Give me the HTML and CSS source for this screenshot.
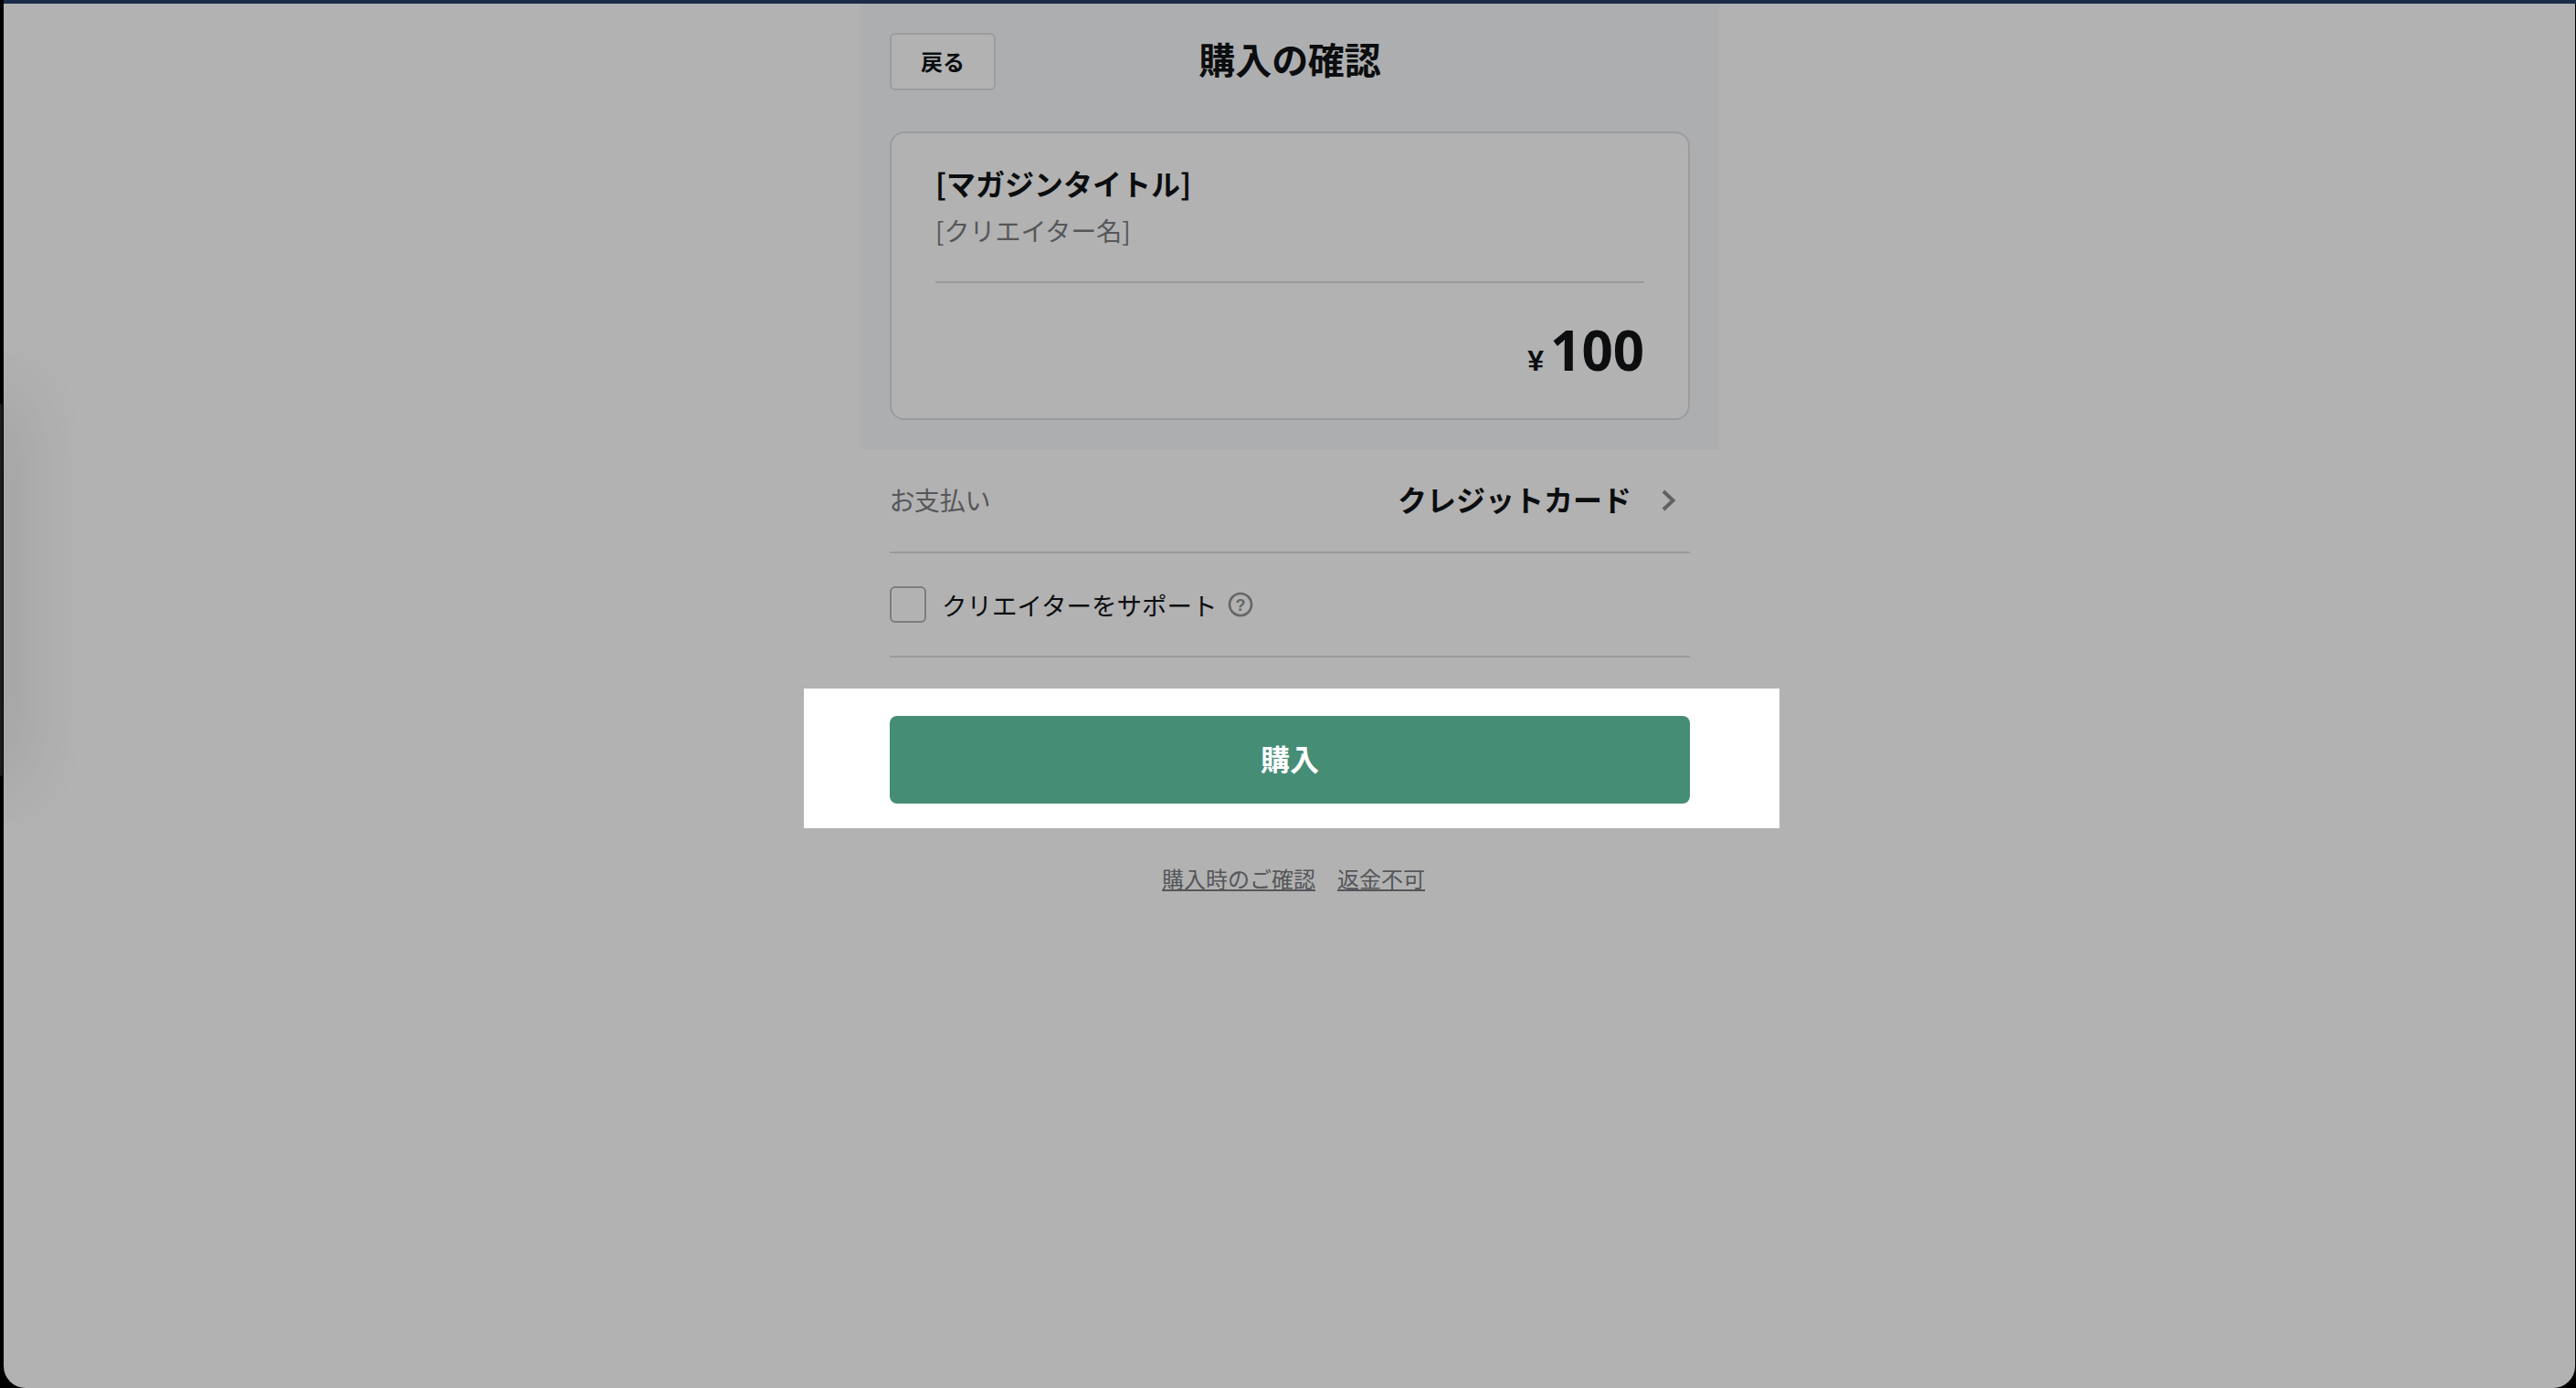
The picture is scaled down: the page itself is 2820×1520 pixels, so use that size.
FILE: index.html
```
<!DOCTYPE html>
<html lang="ja">
<head>
<meta charset="utf-8">
<title>購入の確認</title>
<link rel="stylesheet" href="styles.css">
</head>
<body>
<div class="topbar"></div>
<div class="edge-line"></div>
<div class="window">
  <div class="edge-shadow"></div>
  <section class="panel">
    <header class="header">
      <button class="back">戻る</button>
      <h1 class="title">購入の確認</h1>
    </header>
    <div class="card">
      <div class="card-info">
        <div class="mag-title">[マガジンタイトル]</div>
        <div class="creator">[クリエイター名]</div>
      </div>
      <div class="price"><span class="yen">¥</span><span class="amount">100</span></div>
    </div>
  </section>
  <div class="rows">
    <div class="row pay-row">
      <span class="pay-label">お支払い</span>
      <span class="pay-value">クレジットカード</span>
      <svg class="chevron" viewBox="0 0 16 24" width="16" height="24"><path d="M2 2 L12.5 12 L2 22" fill="none" stroke="#5f6163" stroke-width="4"/></svg>
    </div>
    <div class="row support-row">
      <span class="checkbox"></span>
      <span class="support-label">クリエイターをサポート</span>
      <svg class="help" viewBox="0 0 28 28" width="28" height="28"><circle cx="14" cy="14" r="12" fill="none" stroke="#646668" stroke-width="2.6"/><text x="14" y="20.5" text-anchor="middle" class="help-q">?</text></svg>
    </div>
  </div>
  <div class="buy-wrap"><button class="buy">購入</button></div>
  <div class="links"><a class="link">購入時のご確認</a><a class="link">返金不可</a></div>
</div>
</body>
</html>
```
FILE: styles.css
```
* { box-sizing: border-box; }
html, body { margin: 0; height: 1520px; overflow: hidden; background: #000; }
body { font-family: "Noto Sans CJK JP", "Liberation Sans", sans-serif; color: #0b0d0f; position: relative; }
.topbar { height: 4px; margin-left: 4px; background: #1c2b49; }
.edge-line { position: absolute; left: 0; top: 442px; width: 3px; height: 408px; background: #1c1c1c; border-radius: 0 3px 3px 0; }
.window {
  position: relative;
  height: 1516px;
  margin: 0 1px 0 4px;
  padding-left: 1px;
  background: #b2b2b2;
  border-radius: 0 0 24px 24px;
  display: flex;
  flex-direction: column;
  align-items: center;
  overflow: hidden;
}
.edge-shadow {
  position: absolute;
  left: -20px;
  top: 440px;
  width: 20px;
  height: 400px;
  box-shadow: 0 0 80px 10px rgba(0,0,0,.16);
}
.panel { width: 940px; height: 488px; padding: 32px 32px 0; background: #adaeb0; flex: none; }
.header { display: flex; align-items: center; position: relative; height: 63px; }
.back {
  width: 116px; height: 63px;
  border: 2px solid #9b9c9e; border-radius: 6px;
  background: #b2b2b3;
  font: 700 24px "Noto Sans CJK JP", sans-serif; color: #0b0d0f;
  padding: 0 0 2px;
}
.title {
  position: absolute; left: 0; right: 0; top: 0; bottom: 0;
  margin: 0; text-align: center;
  font-size: 40px; font-weight: 700; line-height: 56px;
  font-feature-settings: "palt";
}
.card {
  margin-top: 45px;
  height: 316px;
  border: 2px solid #9b9c9e; border-radius: 16px;
  background: #b2b2b2;
  padding: 0 48px;
}
.card-info { height: 164px; border-bottom: 2px solid #9a9a9c; padding-top: 30px; }
.mag-title { font-size: 32px; font-weight: 700; line-height: 48px; }
.creator { font-size: 28px; line-height: 40px; color: #55575a; margin-top: 8px; }
.price { display: flex; justify-content: flex-end; align-items: baseline; margin-top: 38px; }
.yen { font: 700 32px "Liberation Sans", sans-serif; margin-right: 7px; }
.amount { font: 700 60px/70px "Open Sans", sans-serif; }
.rows { width: 876px; flex: none; }
.row { display: flex; align-items: center; border-bottom: 2px solid #9a9a9c; }
.pay-row { height: 114px; }
.pay-label { font-size: 28px; color: #55575a; font-feature-settings: "palt"; padding-bottom: 3px; }
.pay-value { margin-left: auto; font-size: 32px; font-weight: 700; padding-bottom: 4px; }
.chevron { margin-left: 33px; margin-right: 15px; }
.support-row { height: 114px; }
.checkbox { width: 40px; height: 40px; border: 2px solid #7c7d7e; border-radius: 6px; flex: none; }
.support-label { margin-left: 17px; font-size: 27.5px; }
.help { margin-left: 12px; }
.help-q { font: 700 18px "Liberation Sans", sans-serif; fill: #646668; }
.buy-wrap { width: 1068px; height: 153px; margin: 34px 0 0 4px; padding: 30px 4px 0 0; background: #fff; display: flex; justify-content: center; flex: none; }
.buy { width: 876px; height: 96px; border: 0; border-radius: 8px; background: #468d76; color: #fff; font: 700 32px "Noto Sans CJK JP", sans-serif; padding: 0 0 4px; }
.links { display: flex; gap: 24px; margin-top: 38px; padding-left: 8px; }
.link { font-size: 24px; line-height: 34px; color: #55575a; text-decoration: underline; }
```
